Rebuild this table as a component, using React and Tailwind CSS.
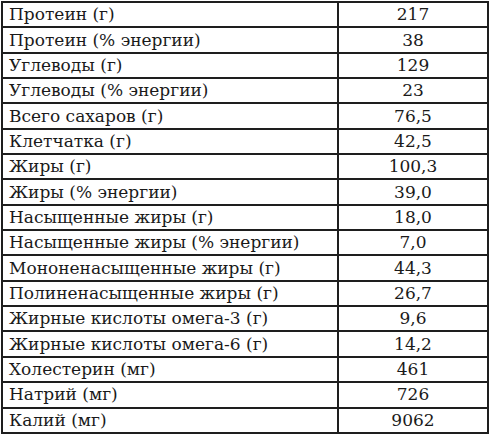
import React from "react";

const rows = [
  ["Протеин (г)", "217"],
  ["Протеин (% энергии)", "38"],
  ["Углеводы (г)", "129"],
  ["Углеводы (% энергии)", "23"],
  ["Всего сахаров (г)", "76,5"],
  ["Клетчатка (г)", "42,5"],
  ["Жиры (г)", "100,3"],
  ["Жиры (% энергии)", "39,0"],
  ["Насыщенные жиры (г)", "18,0"],
  ["Насыщенные жиры (% энергии)", "7,0"],
  ["Мононенасыщенные жиры (г)", "44,3"],
  ["Полиненасыщенные жиры (г)", "26,7"],
  ["Жирные кислоты омега-3 (г)", "9,6"],
  ["Жирные кислоты омега-6 (г)", "14,2"],
  ["Холестерин (мг)", "461"],
  ["Натрий (мг)", "726"],
  ["Калий (мг)", "9062"],
];

export default function App() {
  return (
    <div className="w-[490px] h-[435px] bg-white pl-px pt-px">
      <table
        className="w-[488px] h-[433px] border-collapse text-[#1a1a1a] text-[17px]"
        style={{ fontFamily: '"DejaVu Serif", "Liberation Serif", serif' }}
      >
        <tbody>
          {rows.map(([k, v]) => (
            <tr key={k}>
              <td className="w-[336px] border-2 border-[#1e1e1e] pl-[6px] py-0 leading-none">{k}</td>
              <td className="border-2 border-[#1e1e1e] text-center py-0 leading-none">{v}</td>
            </tr>
          ))}
        </tbody>
      </table>
    </div>
  );
}
